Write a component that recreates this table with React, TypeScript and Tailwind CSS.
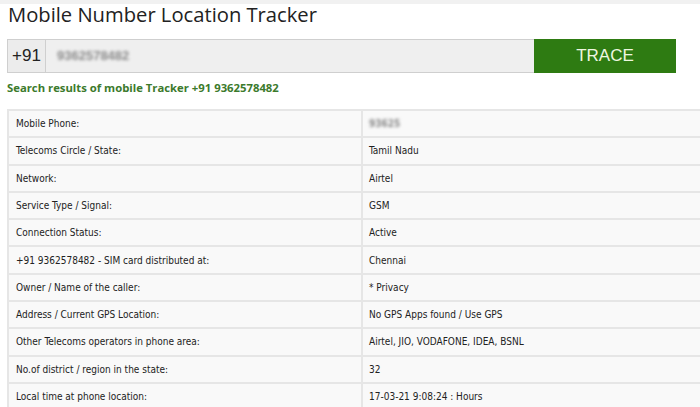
import React from "react";

const rows: [string, string, boolean?][] = [
  ["Mobile Phone:", "93625", true],
  ["Telecoms Circle / State:", "Tamil Nadu"],
  ["Network:", "Airtel"],
  ["Service Type / Signal:", "GSM"],
  ["Connection Status:", "Active"],
  ["+91 9362578482 - SIM card distributed at:", "Chennai"],
  ["Owner / Name of the caller:", "* Privacy"],
  ["Address / Current GPS Location:", "No GPS Apps found / Use GPS"],
  ["Other Telecoms operators in phone area:", "Airtel, JIO, VODAFONE, IDEA, BSNL"],
  ["No.of district / region in the state:", "32"],
  ["Local time at phone location:", "17-03-21 9:08:24 : Hours"],
];

export default function App() {
  return (
    <div className="w-[700px] h-[407px] overflow-hidden bg-white bg-[linear-gradient(#f1f1f1_0_4px,white_4px)]">
      <h1 className="pl-2 pt-[1px] text-[20.2px] leading-[26px] text-[#222] font-['Open_Sans',sans-serif]">
        Mobile Number Location Tracker
      </h1>

      {/* input group */}
      <div className="mt-[12px] ml-[7px] flex h-[34px] w-[669px] font-['Liberation_Sans',Arial,sans-serif]">
        <div className="flex w-[39px] items-center justify-center border border-[#cfcfcf] bg-[#ececec] text-[17px] text-[#222]">
          +91
        </div>
        <div className="flex flex-1 items-center border-y border-[#cfcfcf] bg-[#efefef] pl-[11px]">
          <span className="text-[13px] font-bold text-[#8a8a8a] blur-[1.4px]">9362578482</span>
        </div>
        <button className="w-[142px] bg-[#2e7b12] text-[17px] text-[#eef7e0]">
          TRACE
        </button>
      </div>

      <p className="mt-[7px] ml-[7px] text-[11.3px] font-bold text-[#3c7a2c] font-['Open_Sans',sans-serif]">
        Search results of mobile Tracker +91 9362578482
      </p>

      <table className="mt-[12px] ml-[7px] w-[720px] border-collapse font-['DejaVu_Sans_Condensed','DejaVu_Sans',sans-serif] text-[10px] text-[#222]">
        <tbody>
          {rows.map(([label, value, blurred]) => (
            <tr key={label} className="h-[27.3px] bg-[#f9f9f9]">
              <td className="w-[354px] border-2 border-[#e6e6e6] pl-[7px]">{label}</td>
              <td className="border-2 border-[#e6e6e6] pl-[6px]">
                {blurred ? <span className="font-bold text-[#888] blur-[1.4px]">{value}</span> : value}
              </td>
            </tr>
          ))}
        </tbody>
      </table>
    </div>
  );
}
